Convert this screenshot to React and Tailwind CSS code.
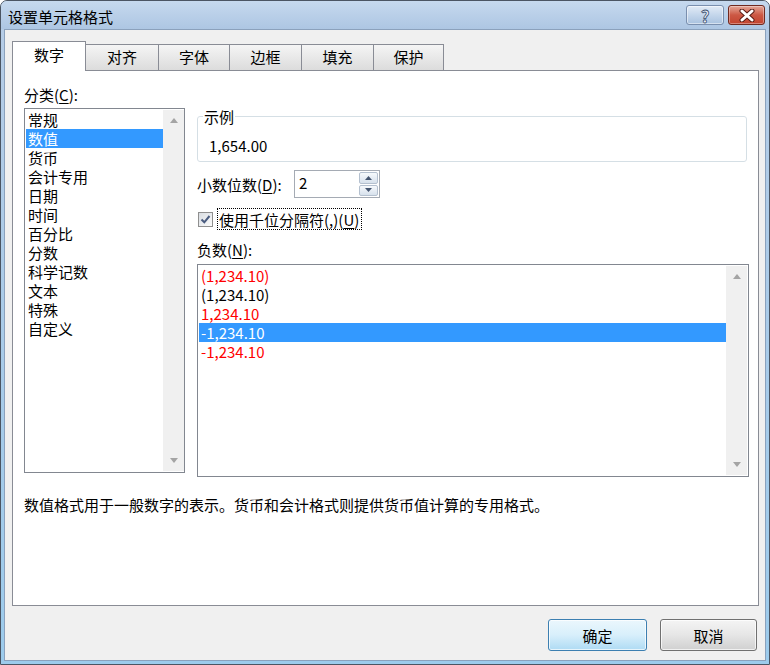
import React from 'react';

const categories = ['常规', '数值', '货币', '会计专用', '日期', '时间', '百分比', '分数', '科学记数', '文本', '特殊', '自定义'];

const negatives = [
  { label: '(1,234.10)', red: true },
  { label: '(1,234.10)', red: false },
  { label: '1,234.10', red: true },
  { label: '-1,234.10', red: true, selected: true },
  { label: '-1,234.10', red: true },
];

const tabs = [
  { label: '数字', w: 'w-[74px]', active: true },
  { label: '对齐', w: 'w-[74px]' },
  { label: '字体', w: 'w-[72px]' },
  { label: '边框', w: 'w-[73px]' },
  { label: '填充', w: 'w-[73px]' },
  { label: '保护', w: 'w-[71px]' },
];

function ScrollTrack() {
  return (
    <div className="flex w-[21px] shrink-0 flex-col justify-between bg-[#f0f0f0]">
      <div className="flex h-[20px] items-center justify-center">
        <svg width="8" height="5" viewBox="0 0 8 5">
          <path d="M0 5L4 0L8 5Z" fill="#a4a4a4" />
        </svg>
      </div>
      <div className="flex h-[21px] items-center justify-center">
        <svg width="8" height="5" viewBox="0 0 8 5">
          <path d="M0 0L8 0L4 5Z" fill="#a4a4a4" />
        </svg>
      </div>
    </div>
  );
}

function Mnemonic({ text, letter, tail }) {
  return (
    <span>
      {text}(<u className="underline-offset-2">{letter}</u>){tail}
    </span>
  );
}

export default function App() {
  return (
    <div className="flex h-[665px] w-[770px] flex-col overflow-hidden rounded-t-[7px] border border-[#4b5563] bg-gradient-to-b from-[#b6cce6] to-[#9ccbec] font-['Noto_Sans_CJK_SC','Microsoft_YaHei',sans-serif] text-[15px] leading-[19px] text-black">
      {/* title bar */}
      <div className="flex h-[28px] shrink-0 items-start bg-gradient-to-b from-[#c6d9ee] to-[#adc6e3] pr-[4px]">
        <span className="mt-[6px] pl-[7px]">设置单元格格式</span>
        <div className="ml-auto mt-[4px] flex gap-[4px]">
          <div className="flex h-[20px] w-[38px] items-center justify-center rounded-[3px] border border-[#7a8fae] bg-gradient-to-b from-[#e2ebf6] via-[#c4d6eb] to-[#a9c2df] shadow-[inset_0_0_0_1px_rgba(255,255,255,0.5)]">
            <span className="text-[17px] font-bold leading-none text-[#eef3f9] [-webkit-text-stroke:0.8px_#3d5170]">?</span>
          </div>
          <div className="flex h-[20px] w-[37px] items-center justify-center rounded-[3px] border border-[#70291f] bg-gradient-to-b from-[#e3a698] via-[#cc5844] to-[#c2432f] shadow-[inset_0_0_0_1px_rgba(255,255,255,0.35)]">
            <svg width="16" height="13" viewBox="0 0 16 13">
              <path d="M3 2L13 11M13 2L3 11" stroke="#5a1c14" strokeWidth="5" strokeLinecap="round" />
              <path d="M3 2L13 11M13 2L3 11" stroke="#ffffff" strokeWidth="3" strokeLinecap="round" />
            </svg>
          </div>
        </div>
      </div>

      {/* client area */}
      <div className="mx-[3px] mb-[3px] flex flex-1 flex-col border border-[#8ba1bc] bg-[#f0f0f0]">
        {/* tabs */}
        <div className="relative z-10 flex h-[41px] items-end pl-[7px]">
          {tabs.map((t) => (
            <div
              key={t.label}
              className={
                t.active
                  ? `flex h-[30px] ${t.w} items-center justify-center border border-b-0 border-[#898c95] bg-white pb-[4px]`
                  : `-ml-px flex h-[27px] ${t.w} items-center justify-center border border-[#898c95] bg-gradient-to-b from-[#f5f5f5] to-[#dcdcdc] pb-[2px]`
              }
            >
              {t.label}
            </div>
          ))}
        </div>

        {/* panel */}
        <div className="-mt-px ml-[7px] flex h-[536px] w-[747px] flex-col border border-[#898c95] bg-white">
          <div className="flex items-start pl-[11px] pt-[14px]">
            {/* left column */}
            <div className="flex w-[161px] flex-col">
              <Mnemonic text="分类" letter="C" tail=":" />
              <div className="mt-[4px] flex h-[365px] border border-[#828790] py-px pl-px">
                <div className="flex flex-1 flex-col">
                  {categories.map((c) => (
                    <div
                      key={c}
                      className={`h-[19px] pl-[2px] ${c === '数值' ? 'bg-[#3399ff] text-white' : ''}`}
                    >
                      {c}
                    </div>
                  ))}
                </div>
                <ScrollTrack />
              </div>
            </div>

            {/* right column */}
            <div className="ml-[12px] mt-[22px] flex w-[552px] flex-col">
              <fieldset className="mr-[2px] rounded-[3px] border border-[#d5dfe5] px-[5px] pb-[6px] pt-[10px]">
                <legend className="px-[1px]">示例</legend>
                <div className="pl-[6px]">1,654.00</div>
              </fieldset>

              <div className="mt-[8px] flex items-center">
                <div className="w-[97px]">
                  <Mnemonic text="小数位数" letter="D" tail=":" />
                </div>
                <div className="flex h-[28px] w-[86px] border border-[#a5abb4] bg-white">
                  <div className="flex-1 pl-[4px] pt-[2px]">2</div>
                  <div className="mr-px flex w-[19px] flex-col gap-px py-px">
                    <div className="flex h-[12px] items-center justify-center rounded-[2px] border border-[#b4c0cf] bg-gradient-to-b from-[#f6f9fc] to-[#d7e1ec]">
                      <svg width="7" height="4" viewBox="0 0 7 4">
                        <path d="M0 4L3.5 0L7 4Z" fill="#43546f" />
                      </svg>
                    </div>
                    <div className="flex h-[12px] items-center justify-center rounded-[2px] border border-[#b4c0cf] bg-gradient-to-b from-[#f6f9fc] to-[#d7e1ec]">
                      <svg width="7" height="4" viewBox="0 0 7 4">
                        <path d="M0 0L7 0L3.5 4Z" fill="#43546f" />
                      </svg>
                    </div>
                  </div>
                </div>
              </div>

              <div className="mt-[10px] flex h-[22px] items-center">
                <div className="ml-px flex h-[15px] w-[15px] items-center justify-center border border-[#8f8f8f] bg-gradient-to-br from-[#d9dde2] to-[#fbfbfb]">
                  <svg width="11" height="11" viewBox="0 0 11 11">
                    <path d="M1.5 5.5L4.3 8.3L9.5 2" fill="none" stroke="#4a5c80" strokeWidth="2" />
                  </svg>
                </div>
                <div className="ml-[4px] flex h-[22px] items-center border border-dotted border-black pl-[1px] pr-[2px]">
                  <span>
                    使用千位分隔符(,)(<u className="underline-offset-2">U</u>)
                  </span>
                </div>
              </div>

              <div className="mt-[10px]">
                <Mnemonic text="负数" letter="N" tail=":" />
              </div>
              <div className="mt-[5px] flex h-[213px] border border-[#828790] p-px">
                <div className="flex flex-1 flex-col">
                  {negatives.map((n, i) => (
                    <div
                      key={i}
                      className={`h-[19px] pl-[2px] ${
                        n.selected ? 'bg-[#3399ff] text-white' : n.red ? 'text-[#ff0000]' : 'text-black'
                      }`}
                    >
                      {n.label}
                    </div>
                  ))}
                </div>
                <ScrollTrack />
              </div>
            </div>
          </div>

          <div className="mt-[18px] pl-[11px]">
            数值格式用于一般数字的表示。货币和会计格式则提供货币值计算的专用格式。
          </div>
        </div>

        {/* buttons */}
        <div className="mt-[13px] flex justify-end gap-[13px] pr-[8px]">
          <button className="flex h-[32px] w-[99px] items-center justify-center rounded-[3px] border border-[#3c7fb1] bg-gradient-to-b from-[#ebf7fd] via-[#d8effb] to-[#aedbf4] shadow-[inset_0_0_0_1px_rgba(255,255,255,0.7)]">
            确定
          </button>
          <button className="flex h-[32px] w-[97px] items-center justify-center rounded-[3px] border border-[#707070] bg-gradient-to-b from-[#f4f4f4] via-[#e6e6e6] to-[#d0d0d0] shadow-[inset_0_0_0_1px_rgba(255,255,255,0.7)]">
            取消
          </button>
        </div>
      </div>
    </div>
  );
}
